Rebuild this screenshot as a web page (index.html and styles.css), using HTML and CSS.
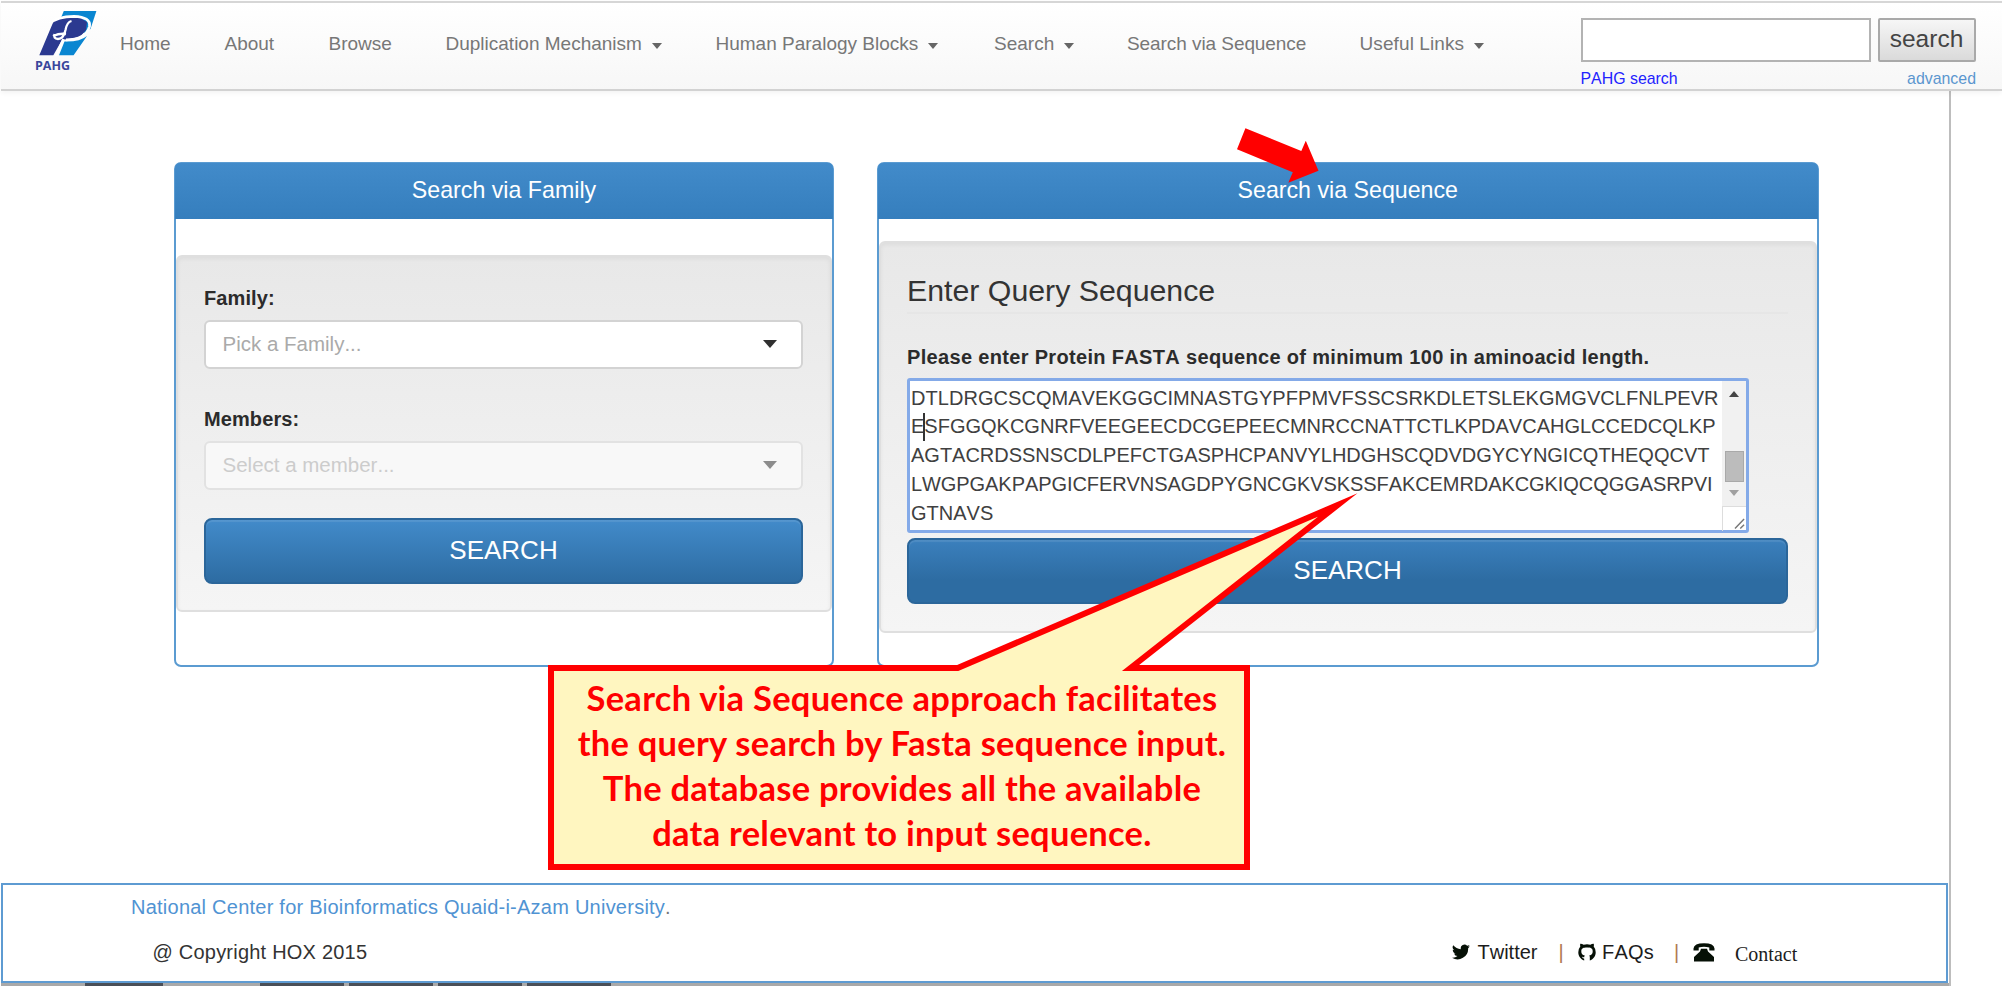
FILE: index.html
```html
<!DOCTYPE html>
<html lang="en">
<head>
<meta charset="utf-8">
<title>PAHG - Search via Sequence</title>
<link rel="stylesheet" href="styles.css">
</head>
<body>
<header class="navbar">
  <a class="brand">
    <svg width="64" height="48" viewBox="34 10 64 48">
      <path d="M63.800 11H96.400L90.500 29L84 33L60 20z" fill="#0a86d1"/>
      <path d="M53.500 21.500L60 18L80 18L87 22L86 30L80 37L62 40L53.300 55.300H39.300z" fill="#2b3990"/>
      <path d="M64.500 41.500Q80 42 87 36L73.600 55.300H59z" fill="#0a86d1"/>
      <path d="M50 23.500Q57 16.300 74 16.300Q91 17 89.500 26.500Q86 39.500 66 39.800" stroke="#fff" stroke-width="2.800" fill="none"/>
      <path d="M63.500 39L56 56" stroke="#fff" stroke-width="2.600" fill="none"/>
      <path d="M71.500 21Q67 22 65.500 30Q63.500 39 58 39Q53 38.500 54.500 34M53 36Q60 33 66 34" stroke="#fff" stroke-width="2.300" fill="none"/>
    </svg>
    <span class="brand-name">PAHG</span>
  </a>
  <nav class="menu">
    <a class="m1">Home</a>
    <a class="m2">About</a>
    <a class="m3">Browse</a>
    <a class="m4">Duplication Mechanism<i class="caret"></i></a>
    <a class="m5">Human Paralogy Blocks<i class="caret"></i></a>
    <a class="m6">Search<i class="caret"></i></a>
    <a class="m7">Search via Sequence</a>
    <a class="m8">Useful Links<i class="caret"></i></a>
  </nav>
  <div class="finder">
    <div class="finder-row"><div class="finder-input"></div><div class="finder-btn">search</div></div>
    <div class="finder-links"><a class="pahg">PAHG search</a><a class="adv">advanced</a></div>
  </div>
</header>

<div class="page">
  <main class="panels">
    <section class="panel family">
      <h2 class="panel-title">Search via Family</h2>
      <div class="well">
        <label class="label">Family:</label>
        <div class="select"><span>Pick a Family...</span><i class="arrow"></i></div>
        <label class="label">Members:</label>
        <div class="select disabled"><span>Select a member...</span><i class="arrow"></i></div>
        <div class="btn">SEARCH</div>
      </div>
    </section>
    <section class="panel sequence">
      <h2 class="panel-title">Search via Sequence</h2>
      <div class="well">
        <h3 class="legend">Enter Query Sequence</h3>
        <label class="label wide">Please enter Protein FASTA sequence of minimum 100 in aminoacid length.</label>
        <div class="textarea">
          <div class="lines">
            <div class="l1">DTLDRGCSCQMAVEKGGCIMNASTGYPFPMVFSSCSRKDLETSLEKGMGVCLFNLPEVR</div>
            <div class="l2">E<i class="cursor"></i>SFGGQKCGNRFVEEGEECDCGEPEECMNRCCNATTCTLKPDAVCAHGLCCEDCQLKP</div>
            <div class="l3">AGTACRDSSNSCDLPEFCTGASPHCPANVYLHDGHSCQDVDGYCYNGICQTHEQQCVT</div>
            <div class="l4">LWGPGAKPAPGICFERVNSAGDPYGNCGKVSKSSFAKCEMRDAKCGKIQCQGGASRPVI</div>
            <div>GTNAVS</div>
          </div>
          <div class="scroll">
            <div class="track"><i class="up"></i><i class="thumb"></i><i class="down"></i></div>
            <svg class="grip" width="24" height="24" viewBox="0 0 24 24"><path d="M12.500 22L22 12M18 22L22 18" stroke="#777" stroke-width="1.500"/></svg>
          </div>
        </div>
        <div class="btn">SEARCH</div>
      </div>
    </section>
  </main>

  <footer class="footer">
    <p class="org">National Center for Bioinformatics Quaid-i-Azam University<b>.</b></p>
    <div class="foot-row">
      <span class="copy">@ Copyright HOX 2015</span>
      <svg class="tw" width="18" height="16" viewBox="0 0 24 20"><path d="M24 2.400a9.800 9.800 0 0 1-2.800.800A4.900 4.900 0 0 0 23.300.500a9.900 9.900 0 0 1-3.100 1.200 4.900 4.900 0 0 0-8.400 4.500A14 14 0 0 1 1.700 1a4.900 4.900 0 0 0 1.500 6.600A4.900 4.900 0 0 1 1 7v.100a4.900 4.900 0 0 0 3.900 4.800 4.900 4.900 0 0 1-2.200.100 4.900 4.900 0 0 0 4.600 3.400A9.900 9.900 0 0 1 0 17.500 14 14 0 0 0 21.500 5z" fill="#061006"/></svg>
      <span class="t-tw">Twitter</span>
      <span class="bar">|</span>
      <svg class="gh" width="18" height="18" viewBox="0 0 18 18"><path d="M6.200 17.500C2.500 16 .3 13 .3 9.200Q.3 5.800 2.300 3.500Q1.800 2 2.300.8Q4 .7 5.600 1.700Q9 .8 12.400 1.700Q14 .7 15.700.8Q16.200 2 15.700 3.500Q17.700 5.800 17.700 9.200C17.700 13 15.500 16 11.800 17.500V14.300Q11.800 13.200 11.200 12.500C14 12.200 14.700 10.500 14.700 8.300C14.700 5.200 12.500 4.600 9 4.600S3.300 5.200 3.300 8.300C3.300 10.500 4 12.200 6.800 12.500Q6.300 13 6.200 14.300Q4.800 14.500 3.800 13.500Q4.500 15.600 6.200 15.800z" fill="#061006"/></svg>
      <span class="t-faq">FAQs</span>
      <span class="bar">|</span>
      <svg class="ph" width="22" height="19" viewBox="0 0 22 19"><path d="M.5 5.500Q1 .3 11 .3T21.500 5.500V7.600H16.300V4.600Q11 3 5.700 4.600V7.600H.500z" fill="#061006"/><path d="M8 5.800H14L15 8.400L21 14V18.600H1V14L7 8.400z" fill="#061006"/></svg>
      <span class="t-con">Contact</span>
    </div>
  </footer>
  <div class="taskbar"><i></i><i></i><i></i><i></i><i></i></div>
</div>

<svg class="pointer" width="82" height="55" viewBox="1237 128 82 55"><path d="M1245.400 128.300L1301.300 151L1305.800 140.700L1318.500 170.700L1288.300 182.700L1292.800 172.300L1237 149.300z" fill="#f00"/></svg>
<div class="callout">
  <svg class="bubble" width="814" height="382" viewBox="546 490 814 382"><path d="M551 668H957.700L1337.700 505L1130.600 668H1247V867H551z" fill="#fff6c0" stroke="#f00" stroke-width="6" stroke-miterlimit="20"/></svg>
  <div class="note">
    <div>Search via Sequence approach facilitates</div>
    <div>the query search by Fasta sequence input.</div>
    <div>The database provides all the available</div>
    <div>data relevant to input sequence.</div>
  </div>
</div>
</body>
</html>
```

FILE: styles.css
```css
* { box-sizing: border-box; }
body {
  margin: 0;
  width: 2002px;
  height: 986px;
  overflow: hidden;
  position: relative;
  background: #fff;
  color: #333;
  font: 20px/28px "Liberation Sans", Arial, sans-serif;
  font-kerning: none;
}
h2, h3, p { margin: 0; font-weight: normal; }
i { font-style: normal; }

/* top bar */
.navbar {
  position: relative;
  display: flex;
  height: 90px;
  margin: 1px 0 0 1px;
  border-top: 2px solid #d6d6d6;
  border-bottom: 2px solid #d2d2d2;
  background: linear-gradient(#fff, #f7f7f7);
  box-shadow: 0 2px 5px rgba(0, 0, 0, .05);
}
.brand { display: flex; flex-direction: column; width: 119px; padding: 7px 0 0 33px; }
.brand-name {
  font: bold 12.500px/13px "Open Sans", sans-serif;
  color: #3a469c;
  padding: 1px 0 0 1px;
}
.menu { display: flex; width: 1458.500px; height: 40px; margin-top: 21px; font-size: 19px; line-height: 40px; color: #777; white-space: nowrap; }
.menu a { display: flex; align-items: center; }
.m1 { width: 104.500px; }
.m2 { width: 104px; }
.m3 { width: 117px; }
.m4 { width: 270px; }
.m5 { width: 278.500px; }
.m6 { width: 133px; }
.menu .m7 { width: 232.500px; letter-spacing: -.07px; }
.m8 { letter-spacing: .1px; }
.caret { border: 5.500px solid transparent; border-top: 6.500px solid #666; border-bottom: 0; margin: 4px 0 0 10px; }
.finder { width: 397px; padding: 15px 0 0 2px; }
.finder-row { display: flex; gap: 7px; }
.finder-input { width: 290px; height: 44px; border: 2px solid #b3b3b3; background: #fff; }
.finder-btn {
  width: 98px; height: 44px;
  border: 2px solid #a9a9a9; border-radius: 2px;
  background: linear-gradient(#f6f6f6, #dadada);
  font-size: 24.500px; line-height: 38px; text-align: center; color: #444;
}
.finder-links { display: flex; justify-content: space-between; width: 395.500px; padding-top: 6px; font-size: 15.900px; line-height: 21px; }
.pahg { color: #22f; }
.adv { color: #5b96cf; }

/* page body with its right edge */
.page { width: 1951px; height: 895px; border-right: 2px solid #bdbdbd; padding-left: 1px; }
.panels { display: flex; gap: 43px; padding: 71px 0 0 173px; }
.panel { height: 505px; border: 2px solid #5b9bd1; border-radius: 7px; }
.family { width: 660px; }
.sequence { width: 941.500px; }
.panel-title {
  height: 56px;
  margin: -1px -1px 0;
  border-radius: 5px 5px 0 0;
  background: linear-gradient(#428bca, #357ebd);
  color: #fff;
  font-size: 23.200px;
  line-height: 54px;
  text-align: center;
}
.well {
  border: 2px solid #dfdfdf;
  border-radius: 6px;
  background: linear-gradient(#e8e8e8, #f5f5f5);
  box-shadow: inset 0 2px 4px rgba(0, 0, 0, .05);
}
.family .well { height: 357px; margin-top: 36px; padding: 27px 27px 0 26px; }
.sequence .well { height: 392px; margin-top: 22px; padding: 25px 26.500px 0 26px; }
.label { display: block; font-weight: bold; color: #2b2b2b; height: 35.500px; line-height: 28px; letter-spacing: .1px; }
.select {
  display: flex; align-items: center; justify-content: space-between;
  height: 49px;
  margin-bottom: 36.500px;
  padding: 0 24px 0 16.500px;
  border: 2px solid #d3d3d3; border-radius: 6px;
  background: #fff;
  color: #aaa;
  font-size: 20.500px;
}
.disabled { margin-bottom: 28.500px; background: #f8f8f8; border-color: #e2e2e2; color: #ccc; }
.arrow { border: 7px solid transparent; border-top: 8px solid #303030; border-bottom: 0; }
.disabled .arrow { border-top-color: #8c8c8c; }
.btn {
  height: 65.500px;
  border: 2px solid #2b669a; border-radius: 8px;
  background: linear-gradient(#428bca, #2d6ca2);
  box-shadow: inset 0 2px 1px rgba(255, 255, 255, .1);
  color: #fff;
  font-size: 26px; line-height: 60px; text-align: center;
}
.sequence .btn { margin-top: 5px; background: linear-gradient(#3b80bd, #2d6ca2 65%); }
.legend { height: 46px; border-bottom: 2px solid #e6e6e6; font-size: 30.300px; line-height: 45px; color: #333; }
.wide { margin-top: 29px; height: 34.500px; line-height: 29px; letter-spacing: .33px; }
.textarea { display: flex; width: 842px; height: 155.500px; border: 3px solid #84aae8; border-radius: 3px; background: #fff; }
.lines { width: 812px; padding: 3px 0 0 1px; line-height: 28.850px; white-space: nowrap; color: #404040; }
.cursor { display: inline-block; width: 2px; height: 28px; margin: 0 -1px; vertical-align: -8px; background: #333; }
.lines div { height: 28.850px; }
.l1 { letter-spacing: .05px; }
.l3 { letter-spacing: -.01px; }
.l4 { letter-spacing: -.07px; }
.scroll { width: 24px; }
.track { display: flex; flex-direction: column; align-items: center; height: 126px; background: #f1f1f1; border-bottom: 1px solid #ddd; }
.up { margin-top: 10px; border: 5.500px solid transparent; border-bottom: 6.500px solid #444; border-top: 0; }
.thumb { width: 19px; height: 31px; margin: 54px 0 8px; background: #bcbcbc; border: 1px solid #a9a9a9; }
.down { border: 5.500px solid transparent; border-top: 6.500px solid #a0a0a0; border-bottom: 0; }
.grip { display: block; border-left: 1px solid #ddd; }

/* footer */
.footer { width: 1946.500px; height: 100px; margin-top: 216px; border: 2px solid #5e9bd2; }
.org { padding: 8px 0 0 128px; height: 47px; line-height: 28px; letter-spacing: .24px; color: #5093d3; white-space: nowrap; }
.org b { font-weight: normal; color: #777; }
.foot-row { display: flex; align-items: center; height: 28px; margin-top: 6px; color: #1c1c1c; white-space: nowrap; }
.copy { flex: none; width: 1299.500px; padding-left: 149.500px; letter-spacing: .22px; color: #333; }
.foot-row svg { flex: none; }
.tw { margin-left: 149.500px; }
.t-tw { width: 88.500px; padding-left: 7.500px; }
.bar { color: #b07a50; width: 19px; }
.t-faq { width: 78.500px; padding-left: 6.500px; letter-spacing: .2px; }
.t-con { padding: 3px 0 0 20px; font-family: "Liberation Serif", "Times New Roman", serif; }
.taskbar { display: flex; gap: 5px; height: 3px; padding-left: 84px; background: #a9a9a9; }
.taskbar i { width: 84px; background: #4a4f57; }
.taskbar i:first-child { width: 78px; margin-right: 92px; }

/* annotations over the page */
.pointer { position: absolute; left: 1237px; top: 128px; }
.callout { position: absolute; left: 546px; top: 490px; width: 814px; height: 382px; }
.bubble { position: absolute; left: 0; top: 0; }
.note {
  position: absolute; left: 5px; top: 185px; width: 702px;
  color: #f00;
  font: bold 34.500px/45.100px Lato, sans-serif;
  letter-spacing: .25px;
  text-align: center;
  white-space: nowrap;
}
```
